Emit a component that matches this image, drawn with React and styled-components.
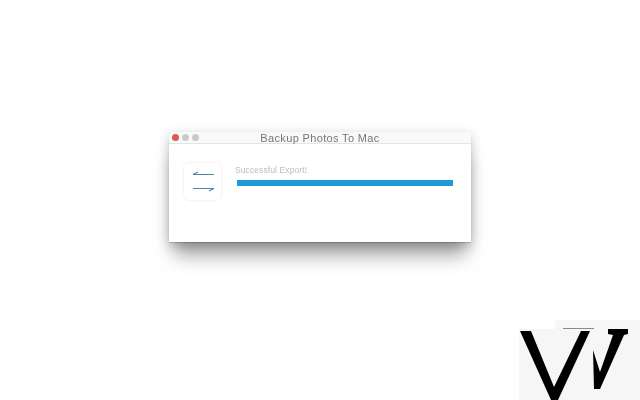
import * as React from "react";
import styled, { createGlobalStyle } from "styled-components";

const Global = createGlobalStyle`
  html, body {
    margin: 0;
    padding: 0;
    background: #fff;
  }
`;

const Page = styled.div`
  position: relative;
  width: 640px;
  height: 400px;
  overflow: hidden;
  padding: 132px 0 0 169px;
  box-sizing: border-box;
  background: #fff;
  font-family: "Liberation Sans", Arial, sans-serif;
`;

const Window = styled.div`
  width: 302px;
  height: 110px;
  background: #fff;
  border-radius: 3px 3px 0 0;
  box-shadow: 0 1px 1px rgba(0, 0, 0, 0.18), 0 18px 18px -5px rgba(0, 0, 0, 0.36), 0 3px 12px rgba(0, 0, 0, 0.22);
`;

const TitleBar = styled.div`
  position: relative;
  height: 11px;
  display: flex;
  align-items: center;
  justify-content: center;
  background: #f9f9f9;
  border-bottom: 1px solid #e4e4e4;
`;

const Lights = styled.div`
  position: absolute;
  left: 3px;
  top: 2px;
  display: flex;
  gap: 3px;
`;

const Light = styled.span`
  width: 7px;
  height: 7px;
  border-radius: 50%;
  background: ${(p) => p.color};
`;

const Title = styled.div`
  font-size: 11px;
  color: #777;
  letter-spacing: 0.35px;
  filter: blur(0.3px);
`;

const Body = styled.div`
  display: flex;
  padding: 18px 18px 0 15px;
  gap: 14px;
`;

const IconBox = styled.div`
  width: 37px;
  height: 37px;
  margin-top: 1px;
  flex: none;
  display: flex;
  align-items: center;
  justify-content: center;
  border-radius: 5px;
  background: #fff;
  box-shadow: 0 0 3px rgba(0, 0, 0, 0.1);
`;

const Content = styled.div`
  flex: 1;
  padding-top: 3px;
`;

const Status = styled.div`
  font-size: 8.5px;
  line-height: 10px;
  color: #bdbdbd;
  letter-spacing: 0.1px;
  filter: blur(0.3px);
`;

const Track = styled.div`
  height: 6px;
  margin: 5px 0 0 2px;
  background: #1e9ad6;
`;

const Mark = styled.svg`
  position: absolute;
  right: 0;
  bottom: 0;
`;

const App = () => (
  <Page>
    <Global />
    <Window>
      <TitleBar>
        <Lights>
          <Light color="#dd5a50" />
          <Light color="#cbcbcb" />
          <Light color="#cbcbcb" />
        </Lights>
        <Title>Backup Photos To Mac</Title>
      </TitleBar>
      <Body>
        <IconBox>
          <svg width="26" height="24" viewBox="0 0 26 24" fill="none" stroke="#4a86a8" strokeWidth="1.2">
            <path d="M3 4.5h21M3 4.5l5-2.5" />
            <path d="M3 18.5h21M24 18.5l-5 2.5" />
          </svg>
        </IconBox>
        <Content>
          <Status>Successful Export!</Status>
          <Track />
        </Content>
      </Body>
    </Window>
    <Mark width="121" height="80" viewBox="519 320 121 80">
      <rect x="519" y="329" width="121" height="71" fill="#f6f6f6" />
      <rect x="555" y="320" width="85" height="9" fill="#f6f6f6" />
      <rect x="563" y="328" width="31" height="1" fill="#8a8a8a" />
      <polygon points="520,331 531,331 554,387 581,331 590,331 558,400 551,400" fill="#000" />
      <polygon points="593,350 600,372 613,335 608,334 608,329 628,329 628,334 624,335 600,389 594,389" fill="#000" />
    </Mark>
  </Page>
);

export default App;
